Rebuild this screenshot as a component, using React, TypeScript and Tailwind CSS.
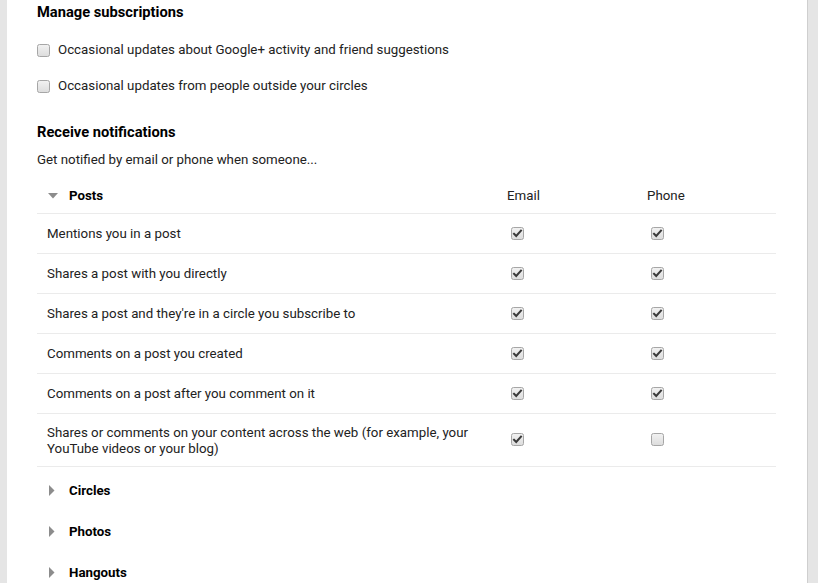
import React from "react";

function Box({ checked }: { checked: boolean }) {
  return (
    <svg width="13" height="13" viewBox="0 0 13 13" className="block">
      <defs>
        <linearGradient id="cbg" x1="0" y1="0" x2="0" y2="1">
          <stop offset="0" stopColor="#f2f2f2" />
          <stop offset="1" stopColor="#dcdcdc" />
        </linearGradient>
      </defs>
      <rect x="0.5" y="0.5" width="12" height="12" rx="2" fill="url(#cbg)" stroke="#a6a6a6" />
      {checked && (
        <path d="M3 6.8 L5.2 9 L10 3.6" fill="none" stroke="#3a3a3a" strokeWidth="2" strokeLinecap="square" />
      )}
    </svg>
  );
}

const rows: { t: React.ReactNode; e: boolean; p: boolean; tall?: boolean }[] = [
  { t: "Mentions you in a post", e: true, p: true },
  { t: "Shares a post with you directly", e: true, p: true },
  { t: "Shares a post and they're in a circle you subscribe to", e: true, p: true },
  { t: "Comments on a post you created", e: true, p: true },
  { t: "Comments on a post after you comment on it", e: true, p: true },
  {
    t: (
      <>
        Shares or comments on your content across the web (for example, your
        <br />
        YouTube videos or your blog)
      </>
    ),
    e: true,
    p: false,
    tall: true,
  },
];

export default function App() {
  return (
    <div
      className="flex h-[583px] w-[818px] overflow-hidden bg-[#e5e5e5] text-[13.3px] text-[#222222]"
      style={{ fontFamily: "Roboto, 'Liberation Sans', Arial, sans-serif" }}
    >
      <div className="w-[7px] shrink-0 bg-[#e5e5e5]" />
      <div className="w-[800px] shrink-0 bg-white pl-[30px] pr-[31px]">
        <div className="flex h-[24px] items-center text-[14.7px] font-bold text-black">Manage subscriptions</div>
        <div className="mt-[8px]">
          <div className="flex h-[36px] items-center gap-[8px]">
            <Box checked={false} />
            <span>Occasional updates about Google+ activity and friend suggestions</span>
          </div>
          <div className="flex h-[36px] items-center gap-[8px]">
            <Box checked={false} />
            <span>Occasional updates from people outside your circles</span>
          </div>
        </div>
        <div className="mt-[16px] flex h-[24px] items-center text-[14.7px] font-bold text-black">Receive notifications</div>
        <div className="mt-[6px] flex h-[20px] items-center">Get notified by email or phone when someone...</div>
        <div className="mt-[8px]">
          <div className="flex h-[36px] items-center border-b border-[#ebebeb]">
            <div className="flex w-[470px] shrink-0 items-center">
              <svg width="10" height="6" viewBox="0 0 10 6" className="ml-[11px] mr-[11px]">
                <path d="M0 0 L10 0 L5 5.5 Z" fill="#8c8c8c" />
              </svg>
              <span className="font-bold text-black">Posts</span>
            </div>
            <div className="w-[140px] shrink-0">Email</div>
            <div className="flex-1">Phone</div>
          </div>
          {rows.map((r, i) => (
            <div
              key={i}
              className={`flex items-center border-b border-[#ebebeb] ${r.tall ? "h-[53px] leading-[16px]" : "h-[40px]"}`}
            >
              <div className={`w-[470px] shrink-0 pl-[10px] ${r.tall ? "mt-[2px]" : ""}`}>{r.t}</div>
              <div className={`w-[140px] shrink-0 pl-[4px] ${r.tall ? "mb-[2px]" : ""}`}>
                <Box checked={r.e} />
              </div>
              <div className={`flex-1 pl-[4px] ${r.tall ? "mb-[2px]" : ""}`}>
                <Box checked={r.p} />
              </div>
            </div>
          ))}
          <div className="mt-[3px]">
            {["Circles", "Photos", "Hangouts"].map((s) => (
              <div key={s} className="flex h-[41px] items-center">
                <svg width="6" height="11" viewBox="0 0 6 11" className="ml-[12px] mr-[14px]">
                  <path d="M0 0 L5.5 5.5 L0 11 Z" fill="#8c8c8c" />
                </svg>
                <span className="font-bold text-black">{s}</span>
              </div>
            ))}
          </div>
        </div>
      </div>
      <div className="w-[1px] shrink-0 bg-[#cfcfcf]" />
      <div className="flex-1 bg-[#e5e5e5]" />
    </div>
  );
}
